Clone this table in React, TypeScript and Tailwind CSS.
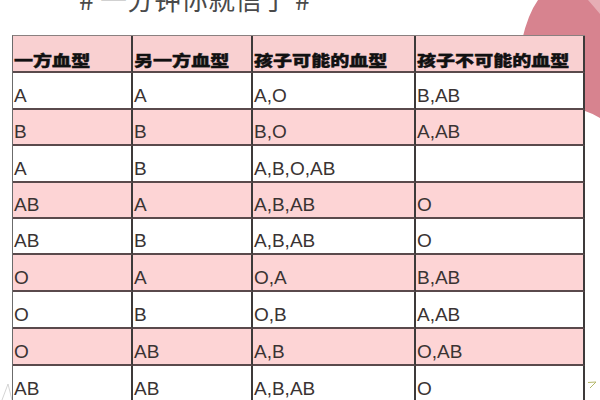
import React from 'react';

type Row = { cells: string[]; pink: boolean; h: string };

const rows: Row[] = [
  { cells: ['A', 'A', 'A,O', 'B,AB'], pink: false, h: 'h-[37px]' },
  { cells: ['B', 'B', 'B,O', 'A,AB'], pink: true, h: 'h-[36px]' },
  { cells: ['A', 'B', 'A,B,O,AB', ''], pink: false, h: 'h-[37px]' },
  { cells: ['AB', 'A', 'A,B,AB', 'O'], pink: true, h: 'h-[36px]' },
  { cells: ['AB', 'B', 'A,B,AB', 'O'], pink: false, h: 'h-[36px]' },
  { cells: ['O', 'A', 'O,A', 'B,AB'], pink: true, h: 'h-[37px]' },
  { cells: ['O', 'B', 'O,B', 'A,AB'], pink: false, h: 'h-[37px]' },
  { cells: ['O', 'AB', 'A,B', 'O,AB'], pink: true, h: 'h-[37px]' },
  { cells: ['AB', 'AB', 'A,B,AB', 'O'], pink: false, h: 'h-[37px]' },
];

const headers = ['一方血型', '另一方血型', '孩子可能的血型', '孩子不可能的血型'];

const cjk = "font-['Noto_Sans_CJK_SC','Noto_Sans',sans-serif]";

const App: React.FC = () => {
  return (
    <div className="relative w-[600px] h-[400px] overflow-hidden bg-white">
      {/* pink decoration in the top right corner */}
      <svg className="absolute right-0 top-0" width="90" height="130" viewBox="510 0 90 130">
        <path d="M538 0 Q528 14 522 40 L522 80 L585 111 Q594 114 600 118 L600 0 Z" fill="#d7838f" />
        <path d="M588 0 Q595 8 600 14 L600 0 Z" fill="#e6aeb5" />
      </svg>

      {/* small marks near the bottom edges */}
      <svg className="absolute left-0 bottom-0" width="14" height="22" viewBox="0 0 14 22">
        <path d="M2 22 L8 6 L12 22" stroke="#c9c9c9" strokeWidth="0.8" fill="none" />
      </svg>
      <svg className="absolute right-[3px] bottom-[11px]" width="10" height="8" viewBox="0 0 10 8">
        <path d="M1 1.5 L9 1 L3 7" stroke="#b5b86a" strokeWidth="1" fill="none" />
      </svg>

      {/* title, cut off by the top edge as in the photo */}
      <div className="relative h-[35px] overflow-hidden">
        <div className={`mt-[-15px] ml-[79px] text-[27px] leading-[28px] text-[#4a4a4a] whitespace-pre ${cjk}`}>
          # 一分钟你就信了 #
        </div>
      </div>

      <div className="relative ml-[12px] w-[573px] border-l border-t border-l-[#6b6b6b] border-t-[#8a8080]">
        <div className="grid grid-cols-[120px_120px_163px_169px] bg-[#f9d0d1]">
          {headers.map((h, i) => (
            <div
              key={i}
              className="h-[37px] flex items-end pb-[4px] pl-[1px] border-r-2 border-b-2 border-r-[#3d3a3a] border-b-[#5a4a4c]"
            >
              <span className={`inline-block origin-left scale-x-[1.27] text-[15px] leading-[15px] font-black text-[#111] whitespace-nowrap [-webkit-text-stroke:0.4px_#111] ${cjk}`}>
                {h}
              </span>
            </div>
          ))}
        </div>
        {rows.map((r, ri) => (
          <div
            key={ri}
            className={`grid grid-cols-[120px_120px_163px_169px] ${r.pink ? 'bg-[#fdd4d5]' : 'bg-white'}`}
          >
            {r.cells.map((c, ci) => (
              <div
                key={ci}
                className={`${r.h} flex items-end pb-[3px] pl-[1px] border-r-2 border-b-2 border-r-[#3d3a3a] border-b-[#5a4a4c] text-[19px] leading-[19px] text-[#3a3333] font-['Liberation_Sans',Arial,sans-serif]`}
              >
                {c}
              </div>
            ))}
          </div>
        ))}
      </div>
    </div>
  );
};

export default App;
